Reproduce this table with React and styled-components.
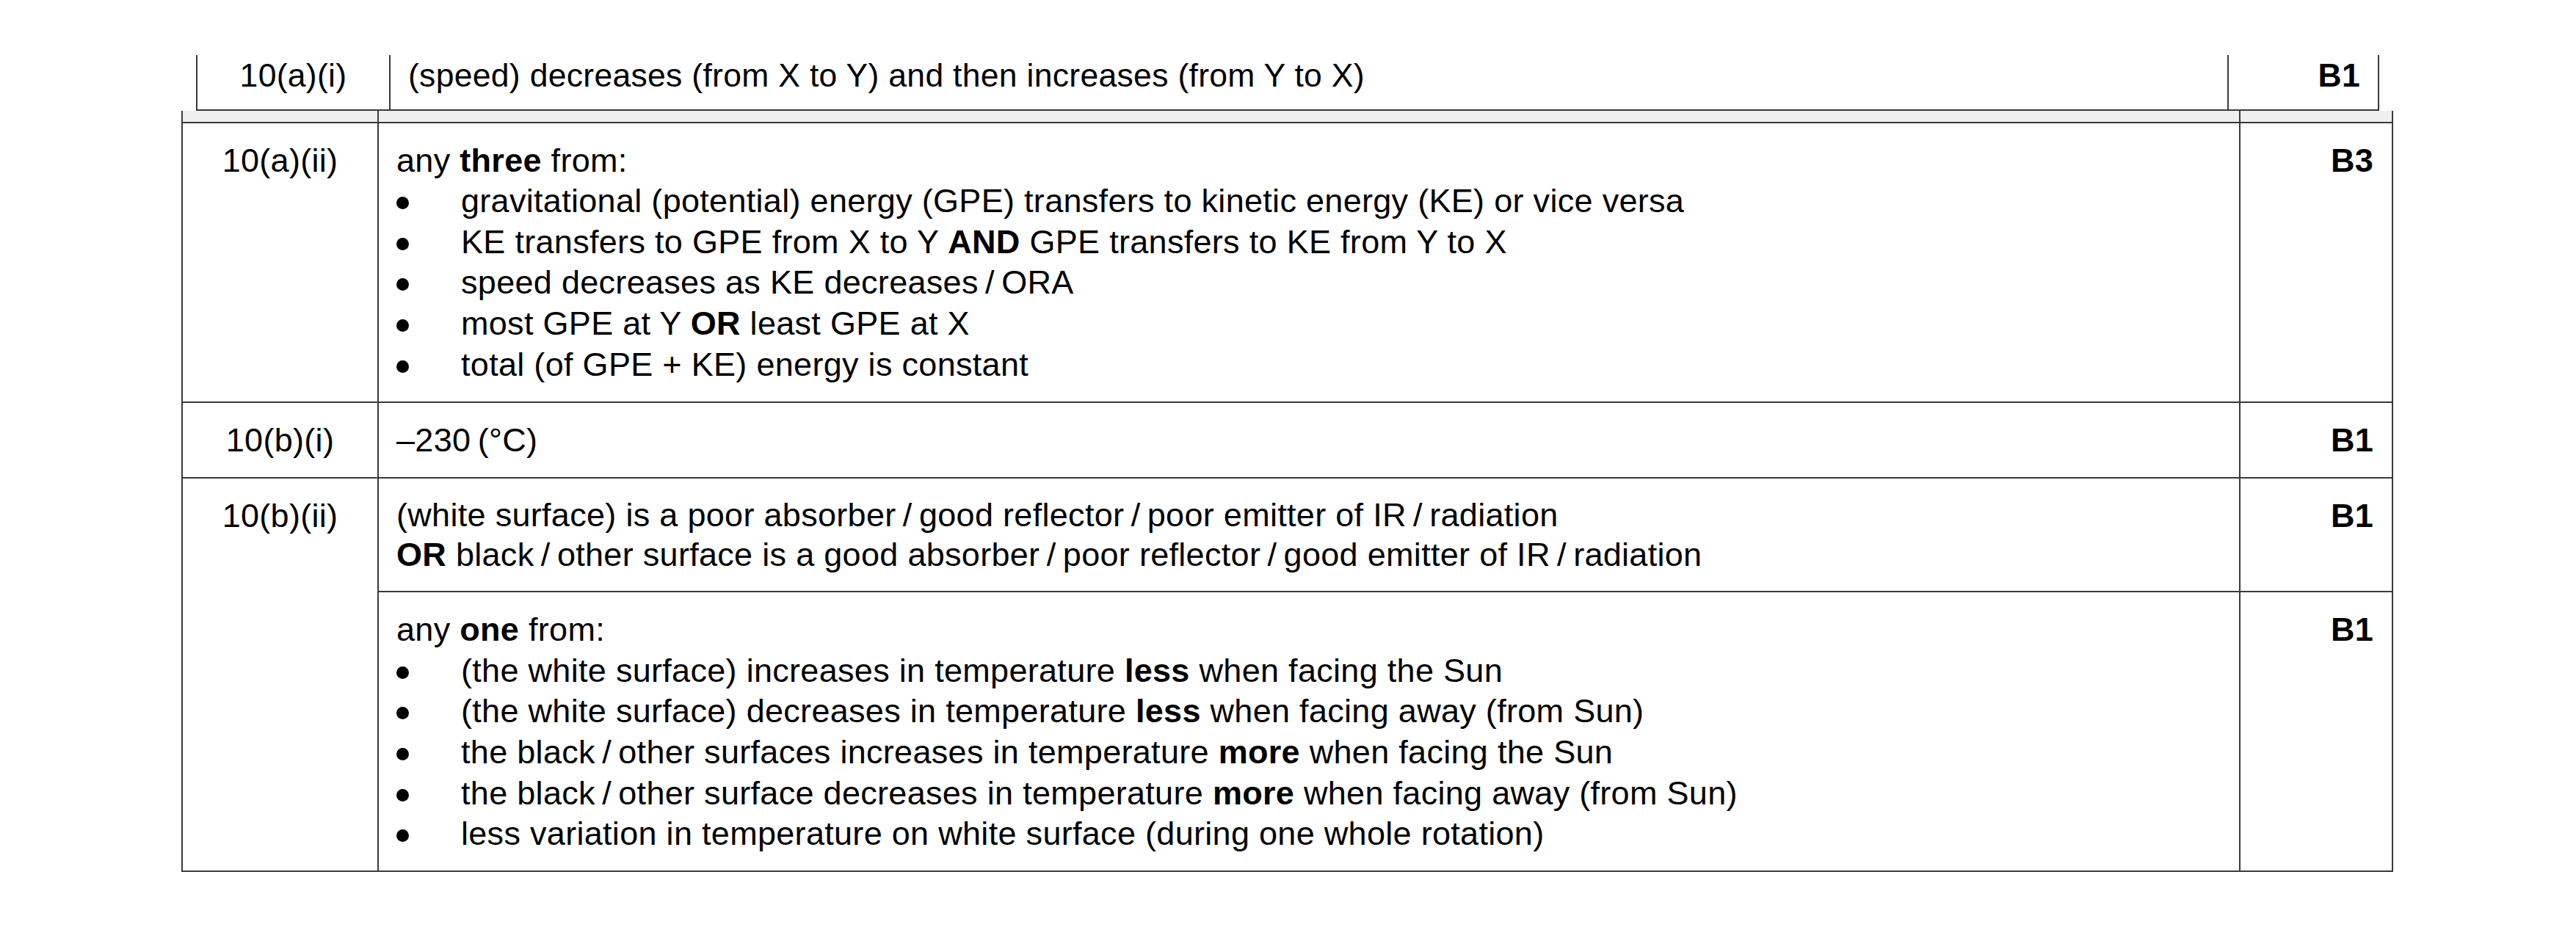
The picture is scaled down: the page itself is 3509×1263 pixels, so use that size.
import React from 'react';
import styled, { createGlobalStyle } from 'styled-components';

const GlobalStyle = createGlobalStyle`
  html, body {
    margin: 0;
    padding: 0;
    background: #fff;
  }
  body {
    font-family: "Liberation Sans", Arial, sans-serif;
    color: #000;
  }
`;

const LINE = '#3a3a3a';

const Page = styled.div`
  padding-top: 75px;
  height: 1263px;
  box-sizing: border-box;
  display: flex;
  flex-direction: column;
`;

const Table = styled.table`
  border-collapse: collapse;
  table-layout: fixed;
  width: ${p => p.$width}px;
  margin-left: ${p => p.$left}px;
  font-size: ${p => p.$size || 45}px;
  letter-spacing: 0.3px;
  line-height: 55.6px;
`;

const Cell = styled.td`
  border: 2px solid ${LINE};
  padding: 23px 24px 22.5px;
  vertical-align: top;
  text-align: left;
  line-height: ${p => (p.$tight ? '54px' : 'inherit')};
`;

const LabelCell = styled(Cell)`
  text-align: center;
`;

const MarkCell = styled(Cell)`
  text-align: right;
  font-weight: 700;
  padding-right: 25px;
`;

// the strip cut off at the top of the page: no top border, no top padding
const StripCell = styled(Cell)`
  border-top: none;
  padding-top: 0;
  padding-bottom: 18px;
  text-align: ${p => p.$align || 'left'};
  font-weight: ${p => (p.$bold ? 700 : 400)};
`;

const GapCell = styled.td`
  border: 2px solid ${LINE};
  border-top: none;
  background: #efefef;
  height: 15px;
  padding: 0;
`;

const Line = styled.div``;

const Bullets = styled.ul`
  list-style: none;
  margin: 0;
  padding: 0;
`;

const Item = styled.li`
  display: flex;
  align-items: flex-start;
`;

const Dot = styled.span`
  flex: 0 0 88px;
  height: 55px;
  position: relative;
  &::before {
    content: '';
    position: absolute;
    left: 0;
    top: 22px;
    width: 17px;
    height: 17px;
    border-radius: 50%;
    background: #000;
  }
`;

const B = styled.b`
  font-weight: 700;
`;

const T = '\u2009';

function BulletList({ items }) {
  return (
    <Bullets>
      {items.map((it, i) => (
        <Item key={i}>
          <Dot />
          <span>{it}</span>
        </Item>
      ))}
    </Bullets>
  );
}

const energyPoints = [
  'gravitational (potential) energy (GPE) transfers to kinetic energy (KE) or vice versa',
  <>KE transfers to GPE from X to Y <B>AND</B> GPE transfers to KE from Y to X</>,
  `speed decreases as KE decreases${T}/${T}ORA`,
  <>most GPE at Y <B>OR</B> least GPE at X</>,
  'total (of GPE + KE) energy is constant',
];

const surfacePoints = [
  <>(the white surface) increases in temperature <B>less</B> when facing the Sun</>,
  <>(the white surface) decreases in temperature <B>less</B> when facing away (from Sun)</>,
  <>the black{T}/{T}other surfaces increases in temperature <B>more</B> when facing the Sun</>,
  <>the black{T}/{T}other surface decreases in temperature <B>more</B> when facing away (from Sun)</>,
  'less variation in temperature on white surface (during one whole rotation)',
];

export default function App() {
  return (
    <Page>
      <GlobalStyle />
      <Table $width={2972} $left={267} $size={44.5}>
        <colgroup>
          <col style={{ width: 263 }} />
          <col style={{ width: 2504 }} />
          <col style={{ width: 205 }} />
        </colgroup>
        <tbody>
          <tr>
            <StripCell $align="center">10(a)(i)</StripCell>
            <StripCell>(speed) decreases (from X to Y) and then increases (from Y to X)</StripCell>
            <StripCell $align="right" $bold>B1</StripCell>
          </tr>
        </tbody>
      </Table>

      <Table $width={3011} $left={247}>
        <colgroup>
          <col style={{ width: 267 }} />
          <col style={{ width: 2536 }} />
          <col style={{ width: 208 }} />
        </colgroup>
        <tbody>
          <tr>
            <GapCell />
            <GapCell />
            <GapCell />
          </tr>
          <tr>
            <LabelCell>10(a)(ii)</LabelCell>
            <Cell>
              <Line>any <B>three</B> from:</Line>
              <BulletList items={energyPoints} />
            </Cell>
            <MarkCell>B3</MarkCell>
          </tr>
          <tr>
            <LabelCell>10(b)(i)</LabelCell>
            <Cell>–230{T}(°C)</Cell>
            <MarkCell>B1</MarkCell>
          </tr>
          <tr>
            <LabelCell rowSpan={2}>10(b)(ii)</LabelCell>
            <Cell $tight>
              <Line>
                (white surface) is a poor absorber{T}/{T}good reflector{T}/{T}poor emitter of IR{T}/{T}radiation
              </Line>
              <Line>
                <B>OR</B> black{T}/{T}other surface is a good absorber{T}/{T}poor reflector{T}/{T}good emitter of IR{T}/{T}radiation
              </Line>
            </Cell>
            <MarkCell>B1</MarkCell>
          </tr>
          <tr>
            <Cell>
              <Line>any <B>one</B> from:</Line>
              <BulletList items={surfacePoints} />
            </Cell>
            <MarkCell>B1</MarkCell>
          </tr>
        </tbody>
      </Table>
    </Page>
  );
}
